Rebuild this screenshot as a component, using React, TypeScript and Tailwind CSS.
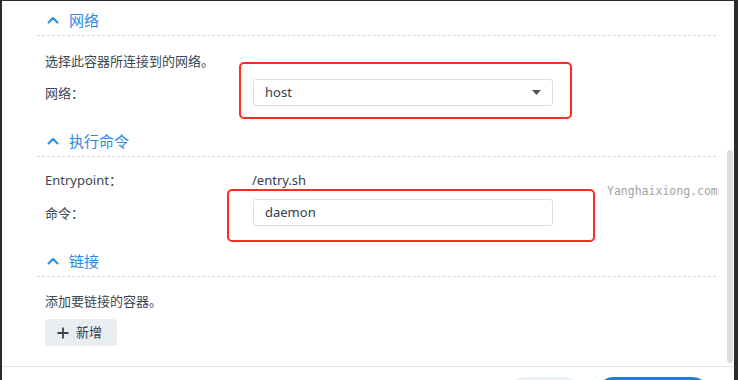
import type { ReactNode } from 'react'

const font = "font-['Noto_Sans','Noto_Sans_CJK_SC',sans-serif]"

function Chevron() {
  return (
    <svg width="12" height="8" viewBox="0 0 12 8" className="shrink-0">
      <path d="M1.5 6.5 L6 2 L10.5 6.5" fill="none" stroke="#2a8ae5" strokeWidth="2" strokeLinecap="round" strokeLinejoin="round" />
    </svg>
  )
}

function SectionHeader({ title, className = '' }: { title: string; className?: string }) {
  return (
    <div className={`flex items-center gap-[10px] pl-[10px] pt-[10px] pb-[6px] border-b border-dashed border-[#c8daee] ${className}`}>
      <Chevron />
      <span className="text-[15px] leading-[18px] text-[#2a8ae5]">{title}</span>
    </div>
  )
}

function Row({ label, children, className = '' }: { label: string; children: ReactNode; className?: string }) {
  return (
    <div className={`flex items-center pl-[8px] ${className}`}>
      <div className="w-[208px] shrink-0 text-[13px] leading-[20px] text-[#3c4650]">{label}</div>
      {children}
    </div>
  )
}

export default function App() {
  return (
    <div className={`relative w-[738px] h-[380px] overflow-hidden bg-white border-t border-l-2 border-r-4 border-[#2b2b2b] ${font}`}>
      {/* scroll area */}
      <div className="h-[365px] overflow-hidden pl-[35px] pr-[18px]">
        <SectionHeader title="网络" />
        <p className="mt-[15px] pl-[8px] text-[13px] leading-[20px] text-[#3c4650]">选择此容器所连接到的网络。</p>
        <Row label="网络：" className="mt-[8px]">
          <div className="flex items-center justify-between w-[300px] h-[27px] px-[11px] border border-[#d7dee5] rounded-[3px] text-[13px] text-[#36404a]">
            <span>host</span>
            <svg width="9" height="5" viewBox="0 0 9 5">
              <path d="M0 0 H9 L4.5 5 Z" fill="#4d5660" />
            </svg>
          </div>
        </Row>

        <SectionHeader title="执行命令" className="mt-[16px]" />
        <Row label="Entrypoint：" className="mt-[13px]">
          <span className="text-[13px] leading-[20px] text-[#36404a] -ml-[1px]">/entry.sh</span>
        </Row>
        <Row label="命令：" className="mt-[9px]">
          <div className="flex items-center w-[300px] h-[27px] px-[11px] border border-[#d7dee5] rounded-[3px] text-[13px] text-[#36404a]">
            daemon
          </div>
        </Row>

        <SectionHeader title="链接" className="mt-[16px]" />
        <p className="mt-[14px] pl-[8px] text-[13px] leading-[20px] text-[#3c4650]">添加要链接的容器。</p>
        <div className="pl-[8px] mt-[8px]">
          <button className="flex items-center gap-[7px] h-[27px] w-[72px] pl-[12px] rounded-[4px] bg-[#e8edf2] text-[13px] text-[#36404a]">
            <svg width="12" height="12" viewBox="0 0 12 12">
              <path d="M6 0.5 V11.5 M0.5 6 H11.5" stroke="#3a4450" strokeWidth="1.8" />
            </svg>
            新增
          </button>
        </div>
      </div>

      {/* footer */}
      <div className="flex justify-end gap-[18px] pt-[10px] pr-[26px] border-t border-[#e2e5e8]">
        <button className="w-[70px] h-[30px] rounded-full bg-[#eef1f4]" />
        <button className="w-[110px] h-[30px] rounded-full bg-[#1a7fe0]" />
      </div>

      {/* scrollbar */}
      <div className="absolute left-[725px] top-[149px] w-[6px] h-[213px] rounded-full bg-[#dedede]" />

      {/* watermark */}
      <span className="absolute left-[605px] top-[182px] text-[11.5px] leading-[16px] text-[#a3a3a3] font-['DejaVu_Sans_Mono',monospace]">
        Yanghaixiong.com
      </span>

      {/* annotation boxes */}
      <div className="absolute left-[237px] top-[61px] w-[333px] h-[57px] border-2 border-[#ff2b22] rounded-[5px]" />
      <div className="absolute left-[225px] top-[188px] w-[368px] h-[53px] border-2 border-[#ff2b22] rounded-[5px]" />
    </div>
  )
}
